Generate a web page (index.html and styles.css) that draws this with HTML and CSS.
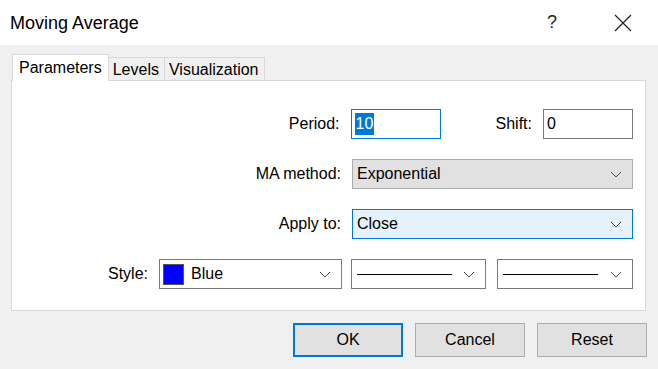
FILE: index.html
```html
<!DOCTYPE html>
<html lang="en">
<head>
  <meta charset="UTF-8" />
  <title>Moving Average</title>
  <link rel="stylesheet" href="styles.css">
</head>
<body>
  <div class="dialog">
    <div class="titlebar">
      <span class="title">Moving Average</span>
      <span class="help">?</span>
      <svg class="close" width="18" height="18" viewBox="0 0 18 18">
        <path d="M1 1 L17 17 M17 1 L1 17" stroke="#222" stroke-width="1.2" fill="none"/>
      </svg>
    </div>

    <div class="content">
      <div class="tabs">
        <div class="tab active">Parameters</div>
        <div class="tab">Levels</div>
        <div class="tab">Visualization</div>
      </div>

      <div class="panel">
        <div class="row">
          <label>Period:</label>
          <div class="field focused"><span class="selected">10</span></div>
          <label class="shift-label">Shift:</label>
          <div class="field shift">0</div>
        </div>

        <div class="row">
          <label>MA method:</label>
          <div class="select wide grey">
            <span>Exponential</span>
            <svg class="chev" width="12" height="7" viewBox="0 0 12 7"><polyline points="1,1 6,6 11,1" stroke="#444" fill="none"/></svg>
          </div>
        </div>

        <div class="row">
          <label>Apply to:</label>
          <div class="select wide hover">
            <span>Close</span>
            <svg class="chev" width="12" height="7" viewBox="0 0 12 7"><polyline points="1,1 6,6 11,1" stroke="#444" fill="none"/></svg>
          </div>
        </div>

        <div class="row">
          <label>Style:</label>
          <div class="select color">
            <span class="swatch"></span>
            <span>Blue</span>
            <svg class="chev" width="12" height="7" viewBox="0 0 12 7"><polyline points="1,1 6,6 11,1" stroke="#444" fill="none"/></svg>
          </div>
          <div class="select line">
            <span class="stroke"></span>
            <svg class="chev" width="12" height="7" viewBox="0 0 12 7"><polyline points="1,1 6,6 11,1" stroke="#444" fill="none"/></svg>
          </div>
          <div class="select line last">
            <span class="stroke"></span>
            <svg class="chev" width="12" height="7" viewBox="0 0 12 7"><polyline points="1,1 6,6 11,1" stroke="#444" fill="none"/></svg>
          </div>
        </div>
      </div>

      <div class="buttons">
        <button class="btn default">OK</button>
        <button class="btn">Cancel</button>
        <button class="btn">Reset</button>
      </div>
    </div>
  </div>
</body>
</html>
```

FILE: styles.css
```css
body {
  margin: 0;
  font-family: 'Liberation Sans', Arial, sans-serif;
  font-size: 16px;
  color: #000;
  background-color: #f0f0f0;
}

.dialog {
  width: 658px;
  height: 369px;
  overflow: hidden;
  background-color: #f0f0f0;
}

.titlebar {
  height: 45px;
  background-color: #fff;
  display: flex;
  align-items: center;
  padding-left: 10px;
}

.title {
  font-size: 18px;
  flex: 1;
  margin-top: 1px;
}

.help {
  font-size: 18px;
  color: #222;
  margin-right: 57px;
}

.close {
  margin-right: 26px;
}

.content {
  padding: 10px 12px 0 11px;
}

.tabs {
  display: flex;
  align-items: flex-end;
  height: 25px;
  padding-left: 1px;
}

.tab {
  height: 22px;
  line-height: 24px;
  padding: 0 5px 0 4px;
  border: 1px solid #d9d9d9;
  border-bottom: none;
  border-left: none;
  background-color: #f0f0f0;
}

.tab.active {
  height: 26px;
  line-height: 25px;
  padding: 0 6px;
  background-color: #fff;
  border-left: 1px solid #d9d9d9;
  margin-bottom: -1px;
  position: relative;
  z-index: 1;
}

.panel {
  background-color: #fff;
  border: 1px solid #d9d9d9;
  height: 201px;
  padding: 28px 12px 0 0;
  display: flex;
  flex-direction: column;
  gap: 20px;
}

.row {
  display: flex;
  justify-content: flex-end;
  align-items: center;
  height: 30px;
}

.row label {
  margin-right: 11px;
}

.field {
  box-sizing: border-box;
  width: 90px;
  height: 30px;
  border: 1px solid #7a7a7a;
  padding: 3px 3px;
  line-height: 22px;
}

.field.focused {
  border-color: #0078d7;
}

.selected {
  background-color: #0078d7;
  color: #fff;
  display: inline-block;
  padding: 0 1px;
}

.shift-label {
  margin-left: 55px;
}

.select {
  box-sizing: border-box;
  height: 30px;
  border: 1px solid #7a7a7a;
  display: flex;
  align-items: center;
  padding: 0 10px 0 4px;
  background-color: #fff;
}

.select .chev {
  margin-left: auto;
}

.select.wide {
  width: 281px;
}

.select.grey {
  background-color: #e1e1e1;
  border-color: #adadad;
}

.select.hover {
  background-color: #e5f1fb;
  border-color: #0078d7;
}

.select.color {
  width: 183px;
  padding-left: 3px;
}

.swatch {
  width: 19px;
  height: 19px;
  background-color: #0000ff;
  border: 1px solid #555;
  margin-right: 7px;
}

.select.line {
  width: 135px;
  margin-left: 9px;
  padding-left: 5px;
}

.select.line.last {
  width: 136px;
  margin-left: 11px;
}

.stroke {
  width: 95px;
  height: 1px;
  background-color: #000;
}

.buttons {
  display: flex;
  justify-content: flex-end;
  gap: 12px;
  margin-top: 12px;
  margin-right: -1px;
}

.btn {
  width: 110px;
  height: 34px;
  font-family: inherit;
  font-size: 16px;
  background-color: #e1e1e1;
  border: 1px solid #adadad;
  color: #000;
  padding: 0;
}

.btn.default {
  border: 2px solid #0078d7;
}
```
